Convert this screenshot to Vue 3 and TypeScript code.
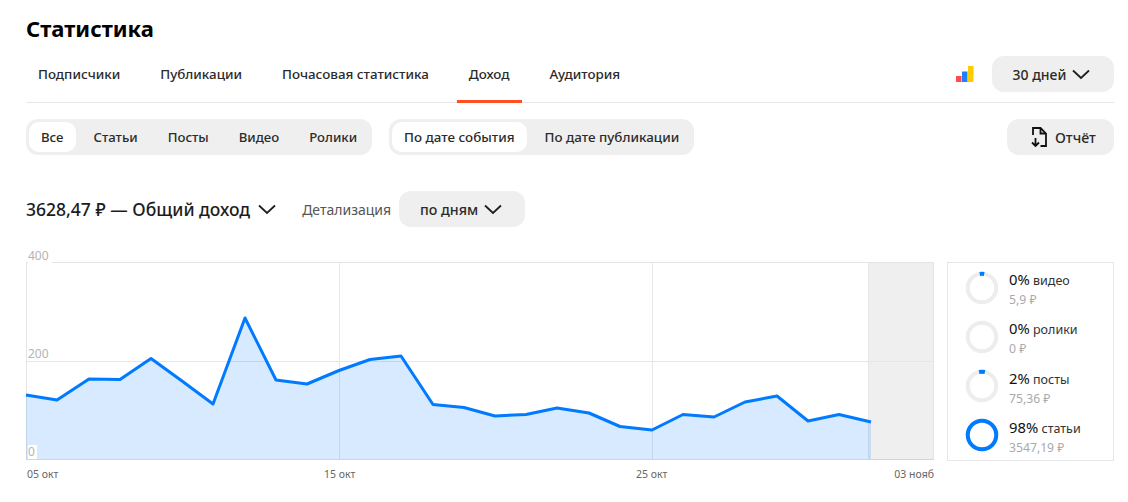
<template>
  <div class="page">
    <h1 class="title">Статистика</h1>

    <div class="tabs">
      <div class="tab-list">
        <div v-for="t in tabs" :key="t" class="tab" :class="{ active: t === 'Доход' }">{{ t }}</div>
      </div>
      <div class="tabs-right">
        <svg class="bars" width="18" height="16" viewBox="0 0 18 16">
          <rect x="0" y="10" width="5.500" height="6" fill="#ff4b4b" />
          <rect x="6" y="5.500" width="5.500" height="10.500" fill="#1f7fff" />
          <rect x="12" y="0" width="5.500" height="16" fill="#ffcc00" />
        </svg>
        <div class="btn period">30 дней <svg class="chev" width="18" height="11" viewBox="0 0 18 11"><path d="M1 1.500 9 9l8-7.500" /></svg></div>
      </div>
    </div>

    <div class="filters">
      <div class="segment types">
        <div v-for="(f, i) in types" :key="f" class="seg-item" :class="{ on: i === 0 }">{{ f }}</div>
      </div>
      <div class="segment">
        <div v-for="(f, i) in dates" :key="f" class="seg-item" :class="{ on: i === 0 }">{{ f }}</div>
      </div>
      <div class="btn report">
        <svg width="16" height="20" viewBox="0 0 16 20" class="doc">
          <path d="M2 8V1h7.500L15 6.500V19H9.500" />
          <path d="M9.500 1v5.500H15" />
          <path d="M4.500 11v8M1 15.500 4.500 19 8 15.500" />
        </svg>
        Отчёт
      </div>
    </div>

    <div class="summary">
      <div class="total">3628,47 ₽ — Общий доход</div>
      <svg class="chev total-chev" width="18" height="11" viewBox="0 0 18 11"><path d="M1 1.500 9 9l8-7.500" /></svg>
      <div class="detail">Детализация</div>
      <div class="btn by-day">по дням <svg class="chev" width="18" height="11" viewBox="0 0 18 11"><path d="M1 1.500 9 9l8-7.500" /></svg></div>
    </div>

    <div class="content">
      <div class="chart">
        <svg class="plot" width="910" height="199" viewBox="0 0 910 199">
          <rect x="843" y="1" width="66" height="197" fill="#efefef" />
          <path d="M1.500 .5H908.500V197.500H1.500Z" fill="none" stroke="#e4e4e4" />
          <path d="M1.500 99.500H908.500" stroke="#e6e6e6" />
          <path d="M314.500 1V198M627.500 1V198M843.500 1V198" stroke="#e6e6e6" />
          <path :d="areaPath" fill="#007aff" fill-opacity="0.155" />
          <path :d="linePath" fill="none" stroke="#007aff" stroke-width="3" stroke-linejoin="round" />
          <path d="M1 197.500H909" stroke="#d4d4d4" />
        </svg>
        <span class="y-label y-400">400</span>
        <span class="y-label y-200">200</span>
        <span class="y-label y-0">0</span>
        <div class="x-axis">
          <span class="x-label x-1">05 окт</span>
          <span class="x-label x-2">15 окт</span>
          <span class="x-label x-3">25 окт</span>
          <span class="x-label x-4">03 нояб</span>
        </div>
      </div>

      <div class="legend">
        <div v-for="row in legend" :key="row.name" class="legend-row">
          <svg width="34" height="34" viewBox="0 0 34 34">
            <circle cx="17" cy="17" r="14.250" fill="none" stroke="#ededed" stroke-width="4" />
            <circle
              v-if="row.arc > 0"
              cx="17"
              cy="17"
              r="14.250"
              fill="none"
              stroke="#007aff"
              stroke-width="4"
              :stroke-dasharray="`${row.arc} 100`"
              pathLength="100"
              :transform="`rotate(${-90 - row.arc * 1.8} 17 17)`"
            />
          </svg>
          <div class="legend-text">
            <div class="legend-main"><b>{{ row.pct }}</b> {{ row.name }}</div>
            <div class="legend-sub">{{ row.sum }}</div>
          </div>
        </div>
      </div>
    </div>
  </div>
</template>

<script setup lang="ts">
const tabs = ['Подписчики', 'Публикации', 'Почасовая статистика', 'Доход', 'Аудитория'];
const types = ['Все', 'Статьи', 'Посты', 'Видео', 'Ролики'];
const dates = ['По дате события', 'По дате публикации'];

const legend = [
  { pct: '0%', name: 'видео', sum: '5,9 ₽', arc: 5 },
  { pct: '0%', name: 'ролики', sum: '0 ₽', arc: 0 },
  { pct: '2%', name: 'посты', sum: '75,36 ₽', arc: 6.5 },
  { pct: '98%', name: 'статьи', sum: '3547,19 ₽', arc: 100 },
];

// page coordinates read off the screenshot, shifted into the plot's own box
const points: [number, number][] = [
  [26, 395], [57, 400], [89, 379], [120, 379.5], [151, 358.5], [182, 381], [213, 404],
  [245, 318], [276, 380], [307, 384], [339, 370.5], [370, 359.5], [401, 356], [433, 404.5],
  [464, 407.5], [495, 416], [526, 414.5], [557, 408], [589, 413], [620, 426.5], [652, 430],
  [683, 414.5], [714, 417], [745, 402], [777, 396], [808, 421], [839, 414.5], [871, 422],
];
const shifted = points.map(([x, y]) => [x - 25, y - 262]);
const linePath = 'M' + shifted.map((p) => p.join(' ')).join('L');
const areaPath = linePath + 'L846 197L1 197Z';
</script>

<style>
body {
  background: #fff;
}
</style>

<style scoped>
.page {
  width: 1128px;
  height: 502px;
  box-sizing: border-box;
  padding: 13px 14px 0 26px;
  font-family: "Noto Sans", "Open Sans", sans-serif;
  color: #222;
  overflow: hidden;
}

.title {
  margin: 0;
  font-size: 22px;
  line-height: 30px;
  font-weight: 700;
  color: #000;
}

.tabs {
  display: flex;
  justify-content: space-between;
  height: 59px;
  border-bottom: 1px solid #e6e6e6;
}

.tab-list {
  display: flex;
  padding-left: 12px;
  gap: 40px;
}

.tab {
  position: relative;
  font-size: 13.400px;
  font-weight: 500;
  line-height: 62px;
  color: #2b2b2b;
}

.tab.active::after {
  content: "";
  position: absolute;
  left: -12px;
  right: -12px;
  bottom: -1px;
  height: 3px;
  background: #ff5021;
}

.tabs-right {
  display: flex;
  align-items: flex-start;
  padding-top: 13px;
}

.bars {
  margin: 10px 18px 0 0;
}

.btn {
  display: flex;
  align-items: center;
  justify-content: center;
  height: 36px;
  border-radius: 12px;
  background: #efefef;
  font-size: 14px;
  font-weight: 500;
  color: #2b2b2b;
}

.period {
  width: 122px;
  box-sizing: border-box;
  padding-right: 3px;
  gap: 6px;
}

.chev {
  fill: none;
  stroke: #1f1f1f;
  stroke-width: 1.800;
}

.filters {
  display: flex;
  gap: 17px;
  margin-top: 16px;
}

.segment {
  display: flex;
  height: 36px;
  box-sizing: border-box;
  padding: 3px 0 3px 3px;
  border-radius: 12px;
  background: #efefef;
  font-size: 13.400px;
}

.segment.types {
  font-size: 13.200px;
}

.seg-item {
  padding: 0 15px;
  border-radius: 10px;
  font-weight: 500;
  line-height: 30px;
  color: #2b2b2b;
}

.seg-item.on {
  padding: 0 12px;
  margin-right: 3px;
  background: #fff;
}

.report {
  width: 107px;
  box-sizing: border-box;
  margin-left: auto;
  padding-left: 24px;
  justify-content: flex-start;
  gap: 8px;
  font-size: 14.200px;
}

.doc {
  fill: none;
  stroke: #111;
  stroke-width: 1.800;
}

.summary {
  display: flex;
  align-items: center;
  height: 36px;
  margin-top: 36px;
}

.total {
  font-size: 17.500px;
  font-weight: 500;
  color: #1c1c1c;
}

.total-chev {
  margin-left: 8px;
}

.detail {
  margin-left: 26px;
  font-size: 14px;
  color: #555;
}

.by-day {
  width: 126px;
  box-sizing: border-box;
  margin-left: 8px;
  padding-right: 2px;
  gap: 6px;
  font-size: 14.200px;
}

.content {
  display: flex;
  gap: 12px;
  margin-top: 35px;
  margin-left: -1px;
}

.chart {
  position: relative;
  width: 910px;
  height: 228px;
}

.plot {
  display: block;
}

.y-label {
  position: absolute;
  left: 3px;
  font-size: 12px;
  line-height: 14px;
  color: #b4b4b4;
}

.y-400 {
  top: -13px;
  padding-right: 3px;
  background: #fff;
}

.y-200 {
  top: 85px;
}

.y-0 {
  top: 183px;
  padding-right: 2px;
  background: #fff;
}

.x-label {
  position: absolute;
  top: 205px;
  font-size: 10.500px;
  line-height: 14px;
  color: #666;
  white-space: nowrap;
}

.x-1 {
  left: 2px;
}

.x-2 {
  left: 299px;
}

.x-3 {
  left: 611px;
}

.x-4 {
  right: 1px;
}

.legend {
  width: 167px;
  height: 199px;
  box-sizing: border-box;
  padding: 0 0 0 17px;
  border: 1px solid #e6e6e6;
  display: flex;
  flex-direction: column;
}

.legend-row {
  display: flex;
  align-items: center;
  gap: 10px;
  height: 49.250px;
}

.legend-row svg {
  display: block;
  flex: none;
}

.legend-text {
  margin-top: 4px;
}

.legend-main {
  font-size: 12.500px;
  line-height: 19px;
  color: #333;
}

.legend-main b {
  font-size: 14.800px;
  font-weight: 400;
  color: #111;
}

.legend-sub {
  font-size: 12.200px;
  line-height: 19px;
  color: #aaa;
}
</style>
